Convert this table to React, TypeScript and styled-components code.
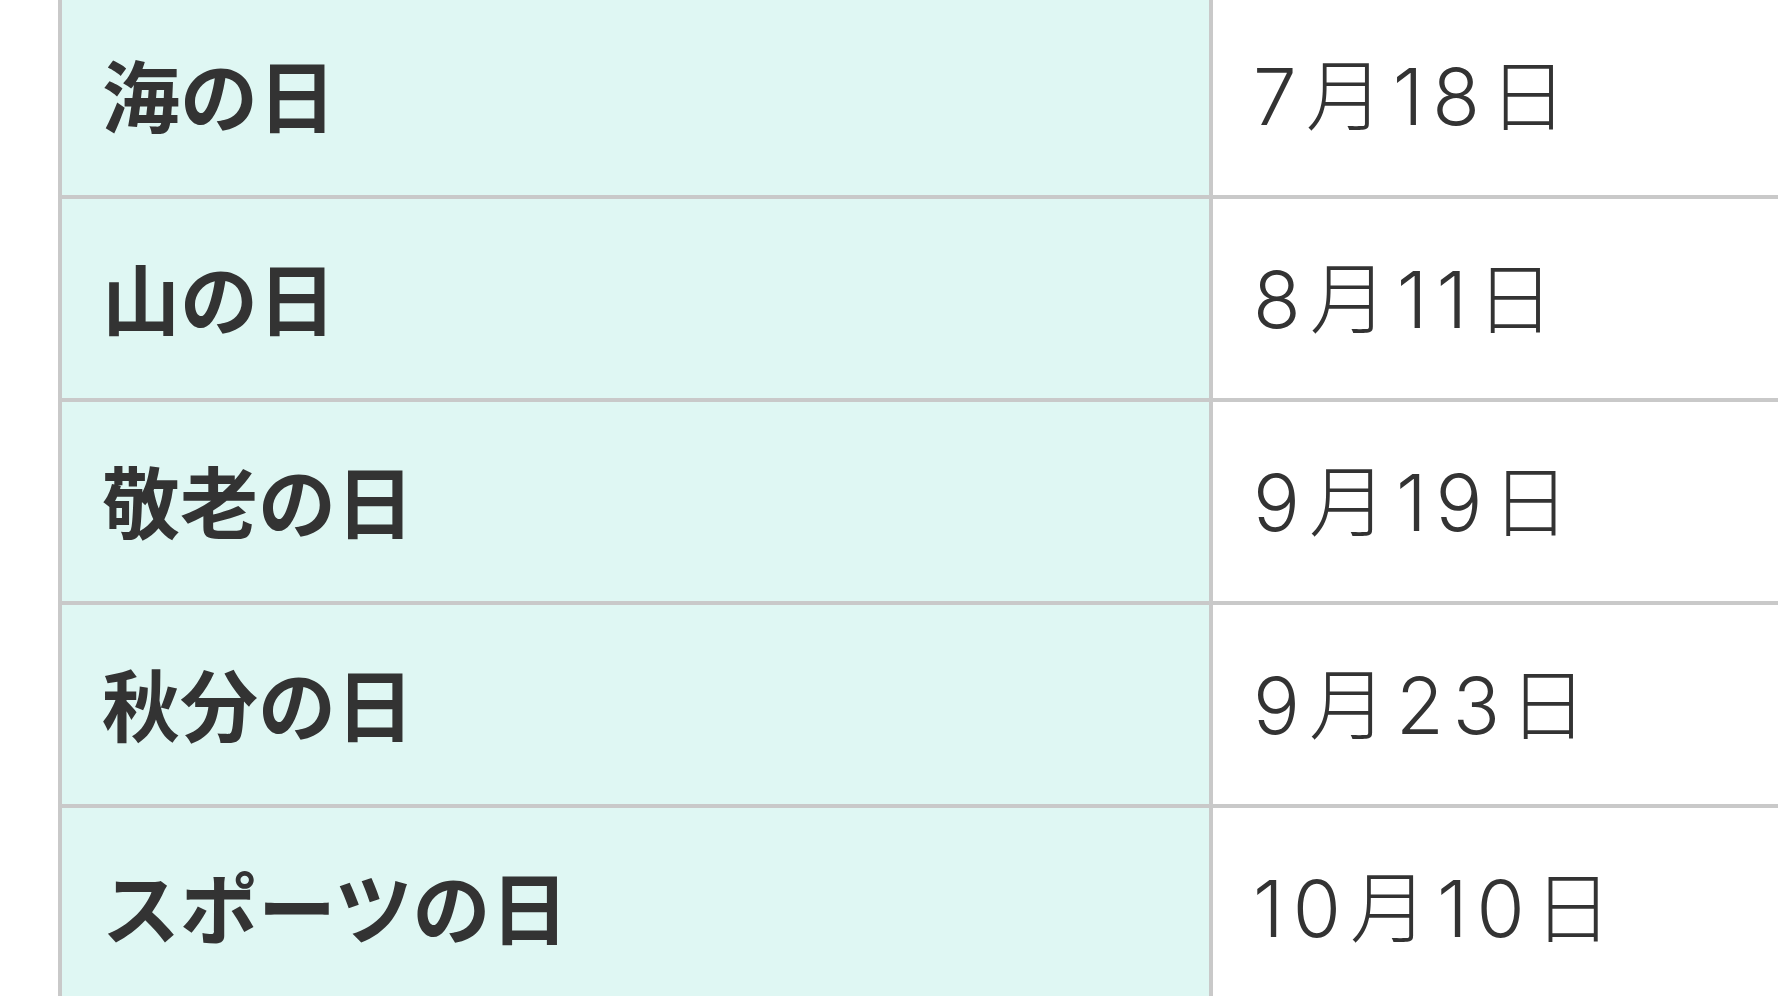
import React from "react";
import styled, { createGlobalStyle } from "styled-components";

const Global = createGlobalStyle`
  html, body {
    margin: 0;
    padding: 0;
    background: #ffffff;
    overflow: hidden;
  }
  body {
    font-family: "Noto Sans CJK JP", "Noto Sans", sans-serif;
    color: #333333;
  }
`;

const Page = styled.div`
  width: 1778px;
  height: 996px;
  overflow: hidden;
  padding-left: 58px;
  box-sizing: border-box;
`;

const Table = styled.table`
  border-collapse: collapse;
  width: 1800px;
  margin-top: -8px;
  table-layout: fixed;
`;

const Row = styled.tr`
  height: 203px;
`;

const Cell = styled.td<{ $head?: boolean }>`
  border: 4px solid #c9c9c9;
  padding: ${(p) => (p.$head ? "0 0 6px 40px" : "2px 0 0 40px")};
  vertical-align: middle;
  font-family: ${(p) =>
    p.$head
      ? `"Noto Sans CJK JP", "Noto Sans", sans-serif`
      : `Inter, "Noto Sans CJK JP", sans-serif`};
  font-size: 78px;
  line-height: 1;
  letter-spacing: ${(p) => (p.$head ? "0" : "9px")};
  color: #333333;
  white-space: nowrap;
  width: ${(p) => (p.$head ? "1107px" : "auto")};
  background: ${(p) => (p.$head ? "#dff7f3" : "#ffffff")};
  font-weight: ${(p) => (p.$head ? 700 : 300)};
`;

const holidays = [
  { name: "海の日", date: "7月18日" },
  { name: "山の日", date: "8月11日" },
  { name: "敬老の日", date: "9月19日" },
  { name: "秋分の日", date: "9月23日" },
  { name: "スポーツの日", date: "10月10日" },
];

export default function App() {
  return (
    <>
      <Global />
      <Page>
        <Table>
          <tbody>
            {holidays.map((h) => (
              <Row key={h.name}>
                <Cell $head>{h.name}</Cell>
                <Cell>{h.date}</Cell>
              </Row>
            ))}
          </tbody>
        </Table>
      </Page>
    </>
  );
}
